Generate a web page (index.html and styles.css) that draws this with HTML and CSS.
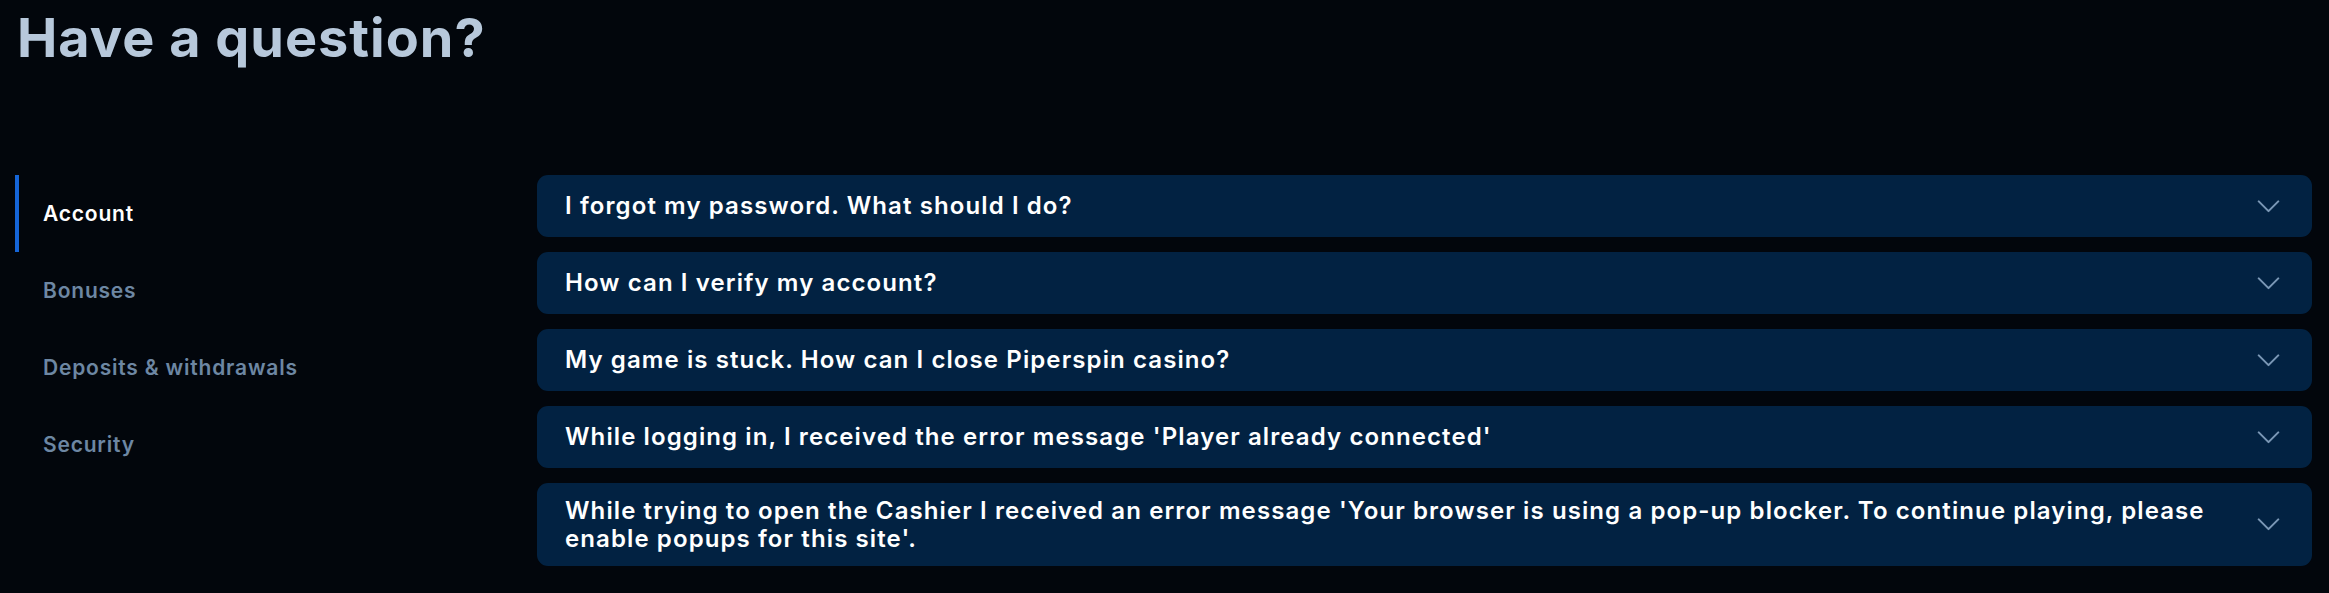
FILE: index.html
```html
<!DOCTYPE html>
<html lang="en">
<head>
<meta charset="utf-8">
<title>Have a question?</title>
<link rel="stylesheet" href="styles.css">
</head>
<body>
<div class="page">
  <h1 class="title">Have a question?</h1>
  <div class="faq">
    <nav class="cats">
      <a class="cat active">Account</a>
      <a class="cat">Bonuses</a>
      <a class="cat">Deposits &amp; withdrawals</a>
      <a class="cat">Security</a>
    </nav>
    <div class="list">
      <div class="q">
        <span class="q-text">I forgot my password. What should I do?</span>
        <span class="q-icon"><svg viewBox="0 0 24 14" width="23" height="13"><path d="M1.5 1.5 L12 12 L22.5 1.5" fill="none" stroke="#7a97b5" stroke-width="2.2" stroke-linecap="round" stroke-linejoin="round"/></svg></span>
      </div>
      <div class="q">
        <span class="q-text">How can I verify my account?</span>
        <span class="q-icon"><svg viewBox="0 0 24 14" width="23" height="13"><path d="M1.5 1.5 L12 12 L22.5 1.5" fill="none" stroke="#7a97b5" stroke-width="2.2" stroke-linecap="round" stroke-linejoin="round"/></svg></span>
      </div>
      <div class="q">
        <span class="q-text">My game is stuck. How can I close Piperspin casino?</span>
        <span class="q-icon"><svg viewBox="0 0 24 14" width="23" height="13"><path d="M1.5 1.5 L12 12 L22.5 1.5" fill="none" stroke="#7a97b5" stroke-width="2.2" stroke-linecap="round" stroke-linejoin="round"/></svg></span>
      </div>
      <div class="q">
        <span class="q-text">While logging in, I received the error message 'Player already connected'</span>
        <span class="q-icon"><svg viewBox="0 0 24 14" width="23" height="13"><path d="M1.5 1.5 L12 12 L22.5 1.5" fill="none" stroke="#7a97b5" stroke-width="2.2" stroke-linecap="round" stroke-linejoin="round"/></svg></span>
      </div>
      <div class="q">
        <span class="q-text">While trying to open the Cashier I received an error message 'Your browser is using a pop-up blocker. To continue playing, please enable popups for this site'.</span>
        <span class="q-icon"><svg viewBox="0 0 24 14" width="23" height="13"><path d="M1.5 1.5 L12 12 L22.5 1.5" fill="none" stroke="#7a97b5" stroke-width="2.2" stroke-linecap="round" stroke-linejoin="round"/></svg></span>
      </div>
    </div>
  </div>
</div>
</body>
</html>
```
FILE: styles.css
```css
* { box-sizing: border-box; }

html, body {
  margin: 0;
  padding: 0;
  background: #02060c;
}

body {
  font-family: Inter, "Noto Sans", "DejaVu Sans", sans-serif;
  color: #ffffff;
}

.page {
  padding: 11px 17px 0 15px;
}

.title {
  margin: 0 0 0 2px;
  font-size: 54px;
  line-height: 54px;
  font-weight: 700;
  letter-spacing: 1px;
  color: #b7c8db;
}

.faq {
  display: flex;
  align-items: flex-start;
  gap: 32px;
  margin-top: 110px;
}

.cats {
  width: 490px;
  flex: none;
  display: flex;
  flex-direction: column;
}

.cat {
  display: flex;
  align-items: center;
  height: 77px;
  padding-left: 24px;
  border-left: 4px solid transparent;
  font-size: 21px;
  font-weight: 600;
  letter-spacing: 0.8px;
  color: #6d87a3;
}

.cat.active {
  border-left-color: #1565d8;
  color: #ffffff;
}

.list {
  flex: 1;
  display: flex;
  flex-direction: column;
  gap: 15px;
}

.q {
  display: flex;
  align-items: center;
  justify-content: space-between;
  min-height: 62px;
  padding: 14px 27px 14px 28px;
  background: #022242;
  border-radius: 11px;
}

.q-text {
  font-size: 24px;
  line-height: 27.5px;
  font-weight: 600;
  letter-spacing: 1.1px;
  color: #ffffff;
}

.q-icon {
  flex: none;
  width: 34px;
  height: 34px;
  display: flex;
  align-items: center;
  justify-content: center;
}

.q-icon svg {
  display: block;
}
```
